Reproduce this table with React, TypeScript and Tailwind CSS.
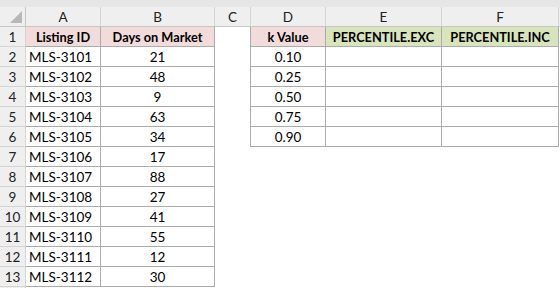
import React from "react";

const listings = [
  ["MLS-3101", "21"],
  ["MLS-3102", "48"],
  ["MLS-3103", "9"],
  ["MLS-3104", "63"],
  ["MLS-3105", "34"],
  ["MLS-3106", "17"],
  ["MLS-3107", "88"],
  ["MLS-3108", "27"],
  ["MLS-3109", "41"],
  ["MLS-3110", "55"],
  ["MLS-3111", "12"],
  ["MLS-3112", "30"],
];

const kValues = ["0.10", "0.25", "0.50", "0.75", "0.90"];
const cols = ["A", "B", "C", "D", "E", "F"];
const widths = ["w-[75px]", "w-[114px]", "w-[36px]", "w-[75px]", "w-[116px]", "w-[117px]"];

function HeaderRow() {
  return (
    <div className="flex h-[20px] bg-[#efefef] border-b border-[#c6c6c6]">
      <div className="w-[26px] shrink-0 border-r border-[#c6c6c6] relative">
        <svg width="12" height="12" className="absolute right-[3px] bottom-[3px]">
          <polygon points="12,0 12,12 0,12" fill="#b8b8b8" />
        </svg>
      </div>
      {cols.map((c, i) => (
        <div
          key={c}
          className={`${widths[i]} shrink-0 border-r border-[#d4d4d4] flex items-center justify-center pt-[2px] text-[#222]`}
        >
          {c}
        </div>
      ))}
    </div>
  );
}

function App() {
  return (
    <div
      className="w-[560px] h-[288px] overflow-hidden bg-white text-[13.5px] leading-none text-black"
      style={{ fontFamily: "Lato, 'Open Sans', sans-serif" }}
    >
      <div className="h-[7px] bg-[#e6e6e6]" />
      <HeaderRow />
      {Array.from({ length: 13 }).map((_, r) => {
        const row = r + 1;
        const listing = r > 0 ? listings[r - 1] : null;
        const k = r > 0 && r <= 5 ? kValues[r - 1] : null;
        const inRight = row <= 6;
        return (
          <div key={row} className="flex h-[20px]">
            <div className="w-[26px] shrink-0 bg-[#efefef] border-r border-b border-[#d4d4d4] flex items-center justify-center pt-[2px] text-[#222]">
              {row}
            </div>
            {/* A */}
            <div
              className={`w-[75px] shrink-0 border-r border-b border-[#ababab] flex items-center pt-[2px] ${
                row === 1 ? "bg-[#f2dcdb] font-bold text-[12.75px] justify-center" : "pl-[3px]"
              }`}
            >
              {row === 1 ? "Listing ID" : listing?.[0]}
            </div>
            {/* B */}
            <div
              className={`w-[114px] shrink-0 border-r border-b border-[#ababab] flex items-center justify-center pt-[2px] ${
                row === 1 ? "bg-[#f2dcdb] font-bold text-[12.75px]" : ""
              }`}
            >
              {row === 1 ? "Days on Market" : listing?.[1]}
            </div>
            {/* C */}
            <div className="w-[35px] shrink-0" />
            {/* D, E, F */}
            {inRight ? (
              <>
                <div
                  className={`w-[76px] shrink-0 border-l border-r border-b border-[#ababab] flex items-center justify-center pt-[2px] ${
                    row === 1 ? "bg-[#f2dcdb] font-bold text-[12.75px]" : ""
                  }`}
                >
                  {row === 1 ? "k Value" : k}
                </div>
                <div
                  className={`w-[116px] shrink-0 border-r border-b border-[#ababab] flex items-center justify-center pt-[2px] ${
                    row === 1 ? "bg-[#d8e4bc] font-bold text-[12.75px]" : ""
                  }`}
                >
                  {row === 1 ? "PERCENTILE.EXC" : ""}
                </div>
                <div
                  className={`w-[117px] shrink-0 border-r border-b border-[#ababab] flex items-center justify-center pt-[2px] ${
                    row === 1 ? "bg-[#d8e4bc] font-bold text-[12.75px]" : ""
                  }`}
                >
                  {row === 1 ? "PERCENTILE.INC" : ""}
                </div>
              </>
            ) : null}
          </div>
        );
      })}
      <div className="flex h-[2px]">
        <div className="w-[26px] bg-[#efefef] border-r border-[#d4d4d4]" />
      </div>
    </div>
  );
}

export default App;
